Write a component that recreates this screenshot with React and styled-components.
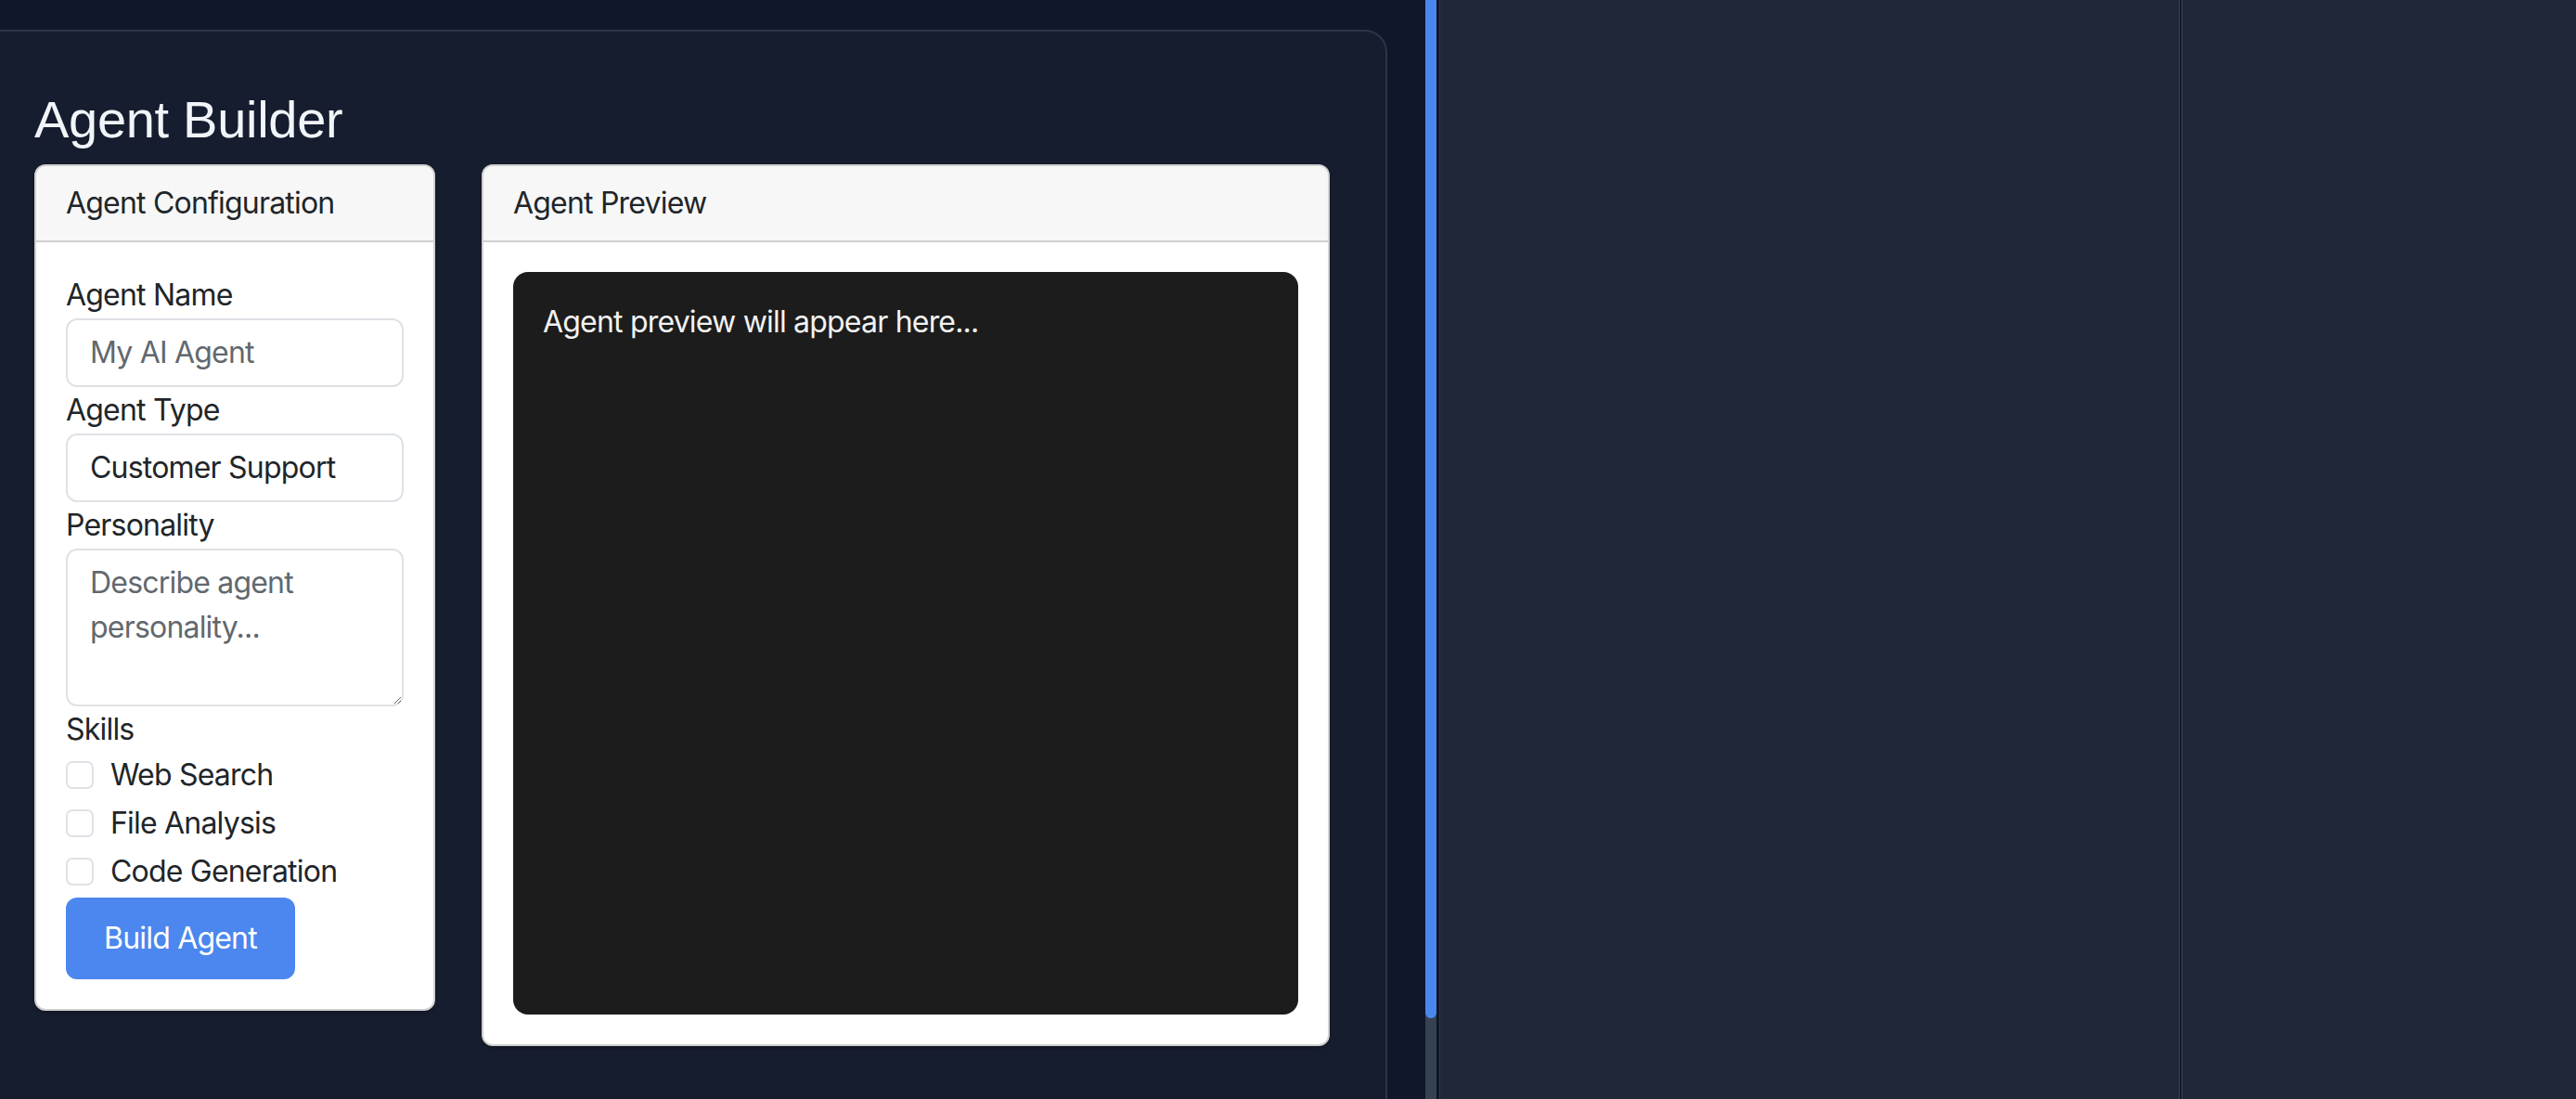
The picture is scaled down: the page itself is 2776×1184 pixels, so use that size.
import React from 'react';
import styled, { createGlobalStyle } from 'styled-components';

const GlobalStyle = createGlobalStyle`
  html, body {
    margin: 0;
    padding: 0;
    background: #10172a;
  }
  * {
    box-sizing: border-box;
  }
`;

const Page = styled.div`
  display: flex;
  width: 2776px;
  height: 1184px;
  overflow: hidden;
  font-family: Inter, "Liberation Sans", sans-serif;
  letter-spacing: -0.8px;
`;

const LeftPane = styled.div`
  width: 1536px;
  flex-shrink: 0;
  background: #10172a;
  padding: 32px 41px 0 0;
  display: flex;
`;

const Panel = styled.div`
  flex: 1;
  background: #161d2e;
  border: 2px solid #2b3546;
  border-left: none;
  border-bottom: none;
  border-top-right-radius: 24px;
  padding: 61px 0 0 37px;
`;

const Title = styled.h1`
  margin: 0 0 15px;
  font-family: "Liberation Sans", Arial, sans-serif;
  font-weight: 400;
  font-size: 56px;
  line-height: 67px;
  letter-spacing: -0.3px;
  color: #f1f5f9;
`;

const CardRow = styled.div`
  display: flex;
  align-items: flex-start;
  gap: 50px;
`;

const Card = styled.div`
  width: ${({ width }) => width}px;
  background: #fff;
  border: 2px solid #d0d0d0;
  border-radius: 12px;
  overflow: hidden;
  box-shadow: 0 2px 3px rgba(0, 0, 0, 0.25);
`;

const CardHeader = styled.div`
  background: #f7f7f7;
  border-bottom: 2px solid #cfcfcf;
  padding: 16px 32px;
  font-size: 32px;
  line-height: 48px;
  color: #212529;
`;

const CardBody = styled.div`
  padding: 32px;
`;

const Label = styled.label`
  display: block;
  font-size: 32px;
  line-height: 50px;
  color: #212529;
`;

const fieldStyles = `
  display: block;
  width: 100%;
  font-family: Inter, "Liberation Sans", sans-serif;
  font-size: 32px;
  line-height: 48px;
  letter-spacing: -0.8px;
  color: #212529;
  background: #fff;
  border: 2px solid #dee2e6;
  border-radius: 12px;
  padding: 11px 24px;
  outline: none;
  &::placeholder {
    color: #62686e;
  }
`;

const TextInput = styled.input`
  ${fieldStyles}
`;

const Select = styled.select`
  ${fieldStyles}
  appearance: none;
`;

const TextArea = styled.textarea`
  ${fieldStyles}
  resize: vertical;
  height: 170px;
`;

const CheckRow = styled.label`
  display: flex;
  align-items: flex-start;
  gap: 18px;
  height: 48px;
  margin-bottom: 4px;
  font-size: 32px;
  line-height: 48px;
  color: #212529;
`;

const CheckBox = styled.input`
  appearance: none;
  width: 30px;
  height: 30px;
  margin: 9px 0 0;
  border: 2px solid #dee2e6;
  border-radius: 7px;
  background: #fff;
  flex-shrink: 0;
`;

const BuildButton = styled.button`
  font-family: Inter, "Liberation Sans", sans-serif;
  font-size: 32px;
  line-height: 48px;
  letter-spacing: -0.8px;
  color: #fff;
  background: #4b87ee;
  border: none;
  border-radius: 12px;
  padding: 20px 41px;
  cursor: pointer;
`;

const PreviewBox = styled.div`
  height: 800px;
  background: #1c1c1c;
  border-radius: 16px;
  padding: 30px 32px;
  font-size: 32px;
  line-height: 48px;
  color: #f2f2f2;
`;

const Gutter = styled.div`
  width: 15px;
  flex-shrink: 0;
  background: #0f1627;
`;

const Track = styled.div`
  width: 12px;
  height: 100%;
  background: #364152;
`;

const Thumb = styled.div`
  height: 1097px;
  background: #4a86ee;
  border-radius: 0 0 6px 6px;
`;

const RightPane = styled.div`
  flex: 1;
  display: flex;
  background: #1e2839;
  border-left: 1px solid #2f3a4b;
`;

const Column = styled.div`
  width: ${({ width }) => (width ? `${width}px` : 'auto')};
  flex: ${({ width }) => (width ? '0 0 auto' : 1)};
`;

const Divider = styled.div`
  width: 4px;
  background: #141b2b;
  border-left: 1px solid #364256;
  border-right: 1px solid #364256;
`;

const skills = ['Web Search', 'File Analysis', 'Code Generation'];

function App() {
  return (
    <>
      <GlobalStyle />
      <Page>
        <LeftPane>
          <Panel>
            <Title>Agent Builder</Title>
            <CardRow>
              <Card width={432}>
                <CardHeader>Agent Configuration</CardHeader>
                <CardBody>
                  <Label htmlFor="agent-name">Agent Name</Label>
                  <TextInput id="agent-name" placeholder="My AI Agent" />
                  <Label htmlFor="agent-type">Agent Type</Label>
                  <Select id="agent-type" defaultValue="support">
                    <option value="support">Customer Support</option>
                    <option value="research">Research Assistant</option>
                    <option value="code">Code Helper</option>
                  </Select>
                  <Label htmlFor="agent-personality">Personality</Label>
                  <TextArea id="agent-personality" rows={3} placeholder="Describe agent personality..." />
                  <Label>Skills</Label>
                  {skills.map((skill) => (
                    <CheckRow key={skill}>
                      <CheckBox type="checkbox" />
                      {skill}
                    </CheckRow>
                  ))}
                  <BuildButton>Build Agent</BuildButton>
                </CardBody>
              </Card>
              <Card width={914}>
                <CardHeader>Agent Preview</CardHeader>
                <CardBody>
                  <PreviewBox>Agent preview will appear here...</PreviewBox>
                </CardBody>
              </Card>
            </CardRow>
          </Panel>
        </LeftPane>
        <Gutter>
          <Track>
            <Thumb />
          </Track>
        </Gutter>
        <RightPane>
          <Column width={796} />
          <Divider />
          <Column />
        </RightPane>
      </Page>
    </>
  );
}

export default App;
